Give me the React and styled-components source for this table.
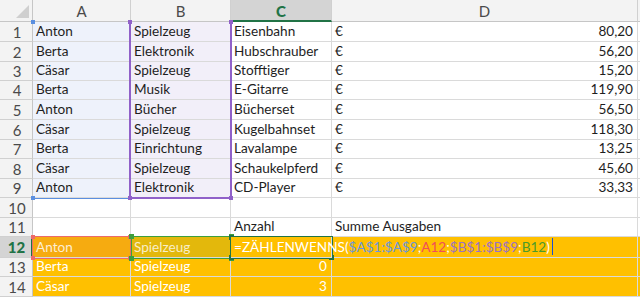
import React from "react";
import styled, { createGlobalStyle, css } from "styled-components";

const GlobalStyle = createGlobalStyle`
  body {
    margin: 0;
    overflow: hidden;
    background: #fff;
    font-family: Lato, "Open Sans", "Liberation Sans", sans-serif;
  }
`;

const ROW_HEIGHTS = [20, 20, 19, 19, 20, 20, 19, 20, 19, 20, 19, 21, 19, 20];

const rows = [
  ["Anton", "Spielzeug", "Eisenbahn", "80,20"],
  ["Berta", "Elektronik", "Hubschrauber", "56,20"],
  ["Cäsar", "Spielzeug", "Stofftiger", "15,20"],
  ["Berta", "Musik", "E-Gitarre", "119,90"],
  ["Anton", "Bücher", "Bücherset", "56,50"],
  ["Cäsar", "Spielzeug", "Kugelbahnset", "118,30"],
  ["Berta", "Einrichtung", "Lavalampe", "13,25"],
  ["Cäsar", "Spielzeug", "Schaukelpferd", "45,60"],
  ["Anton", "Elektronik", "CD-Player", "33,33"],
];

const AMBER = "#ffc000";

const Sheet = styled.div`
  display: grid;
  grid-template-columns: 33px 98px 100px 101px 306px 1fr;
  grid-template-rows: 22px ${ROW_HEIGHTS.map((h) => h + "px").join(" ")};
  width: 640px;
  height: 297px;
  overflow: hidden;
  font-size: 13.6px;
  color: #1e1e1e;
`;

const Cell = styled.div`
  grid-row: ${(p) => p.$r + 1};
  grid-column: ${(p) => p.$c + 1};
  box-sizing: border-box;
  border-right: 1px solid #dadada;
  border-bottom: 1px solid #dadada;
  display: flex;
  align-items: flex-end;
  justify-content: ${(p) => p.$align || "flex-start"};
  padding: 0 4px 2px 3px;
  white-space: nowrap;
  overflow: visible;
  min-width: 0;
  background: ${(p) => p.$bg || "#fff"};
  color: ${(p) => p.$fg || "#1e1e1e"};
  line-height: 16px;
  z-index: ${(p) => (p.$front ? 3 : "auto")};
`;

const ColHead = styled.div`
  grid-row: 1;
  grid-column: ${(p) => p.$c + 1};
  box-sizing: border-box;
  border-right: 1px solid #d0d0d0;
  border-bottom: ${(p) => (p.$active ? "2px solid #217346" : "1px solid #c6c6c6")};
  background: ${(p) => (p.$active ? "#d4d4d4" : "#f3f3f3")};
  color: ${(p) => (p.$active ? "#217346" : "#4a4a4a")};
  font-weight: ${(p) => (p.$active ? 900 : 400)};
  font-size: 15px;
  display: flex;
  align-items: center;
  justify-content: center;
  padding-top: 1px;
`;

const RowHead = styled.div`
  grid-row: ${(p) => p.$r + 1};
  grid-column: 1;
  box-sizing: border-box;
  border-bottom: 1px solid #d0d0d0;
  border-right: ${(p) => (p.$active ? "2px solid #217346" : "1px solid #c6c6c6")};
  background: ${(p) => (p.$active ? "#d4d4d4" : "#f3f3f3")};
  color: ${(p) => (p.$active ? "#217346" : "#4a4a4a")};
  font-weight: ${(p) => (p.$active ? 900 : 400)};
  font-size: 15px;
  display: flex;
  align-items: center;
  justify-content: center;
  padding-left: 2px;
`;

const Corner = styled.div`
  grid-row: 1;
  grid-column: 1;
  box-sizing: border-box;
  background: #f3f3f3;
  border-right: 1px solid #c6c6c6;
  border-bottom: 1px solid #c6c6c6;
  display: flex;
  align-items: flex-end;
  justify-content: flex-end;
  padding: 0 3px 3px 0;
`;

const Range = styled.div`
  grid-row: ${(p) => p.$rows};
  grid-column: ${(p) => p.$cols};
  position: relative;
  z-index: 2;
  pointer-events: none;
  margin: ${(p) => p.$margin || "-1px -1px -1px -2px"};
  border: ${(p) => p.$width || 1}px solid ${(p) => p.$color};
  ${(p) =>
    p.$hide &&
    css`
      ${p.$hide.map((s) => `border-${s}-color: transparent;`).join("\n")}
    `}
`;

const Handle = styled.span`
  position: absolute;
  width: ${(p) => p.$size || 4}px;
  height: ${(p) => p.$size || 4}px;
  background: ${(p) => p.$color};
  ${(p) => (p.$top ? "top" : "bottom")}: ${(p) => p.$off || -3}px;
  ${(p) => (p.$left ? "left" : "right")}: ${(p) => p.$off || -3}px;
`;

const Formula = styled.span`
  color: #fff;
`;

const Ref = styled.span`
  color: ${(p) => p.$color};
`;

const Caret = styled.span`
  display: inline-block;
  width: 1px;
  height: 17px;
  background: #1a4fd6;
  margin-left: 2px;
  vertical-align: -3px;
`;

function Corners({ color, size, off }) {
  return (
    <>
      <Handle $color={color} $size={size} $off={off} $top $left />
      <Handle $color={color} $size={size} $off={off} $top />
      <Handle $color={color} $size={size} $off={off} $left />
      <Handle $color={color} $size={size} $off={off} />
    </>
  );
}

export default function App() {
  const total = 14;
  return (
    <>
      <GlobalStyle />
      <Sheet>
        <Corner>
          <svg width="13" height="13" viewBox="0 0 13 13">
            <polygon points="13,0 13,13 0,13" fill="#cfcfcf" />
          </svg>
        </Corner>
        {["A", "B", "C", "D", ""].map((l, i) => (
          <ColHead key={l + i} $c={i + 1} $active={l === "C"}>
            {l}
          </ColHead>
        ))}

        {Array.from({ length: total }, (_, i) => (
          <RowHead key={i} $r={i + 1} $active={i + 1 === 12}>
            {i + 1}
          </RowHead>
        ))}

        {rows.map((r, i) => (
          <React.Fragment key={i}>
            <Cell $r={i + 1} $c={1} $bg="#eef2fb">{r[0]}</Cell>
            <Cell $r={i + 1} $c={2} $bg="#f2eff9">{r[1]}</Cell>
            <Cell $r={i + 1} $c={3}>{r[2]}</Cell>
            <Cell $r={i + 1} $c={4} $align="space-between">
              <span>€</span>
              <span>{r[3]}</span>
            </Cell>
            <Cell $r={i + 1} $c={5} />
          </React.Fragment>
        ))}

        {[10, 11].map((r) => (
          <React.Fragment key={r}>
            <Cell $r={r} $c={1} />
            <Cell $r={r} $c={2} />
            <Cell $r={r} $c={3}>{r === 11 ? "Anzahl" : ""}</Cell>
            <Cell $r={r} $c={4}>{r === 11 ? "Summe Ausgaben" : ""}</Cell>
            <Cell $r={r} $c={5} />
          </React.Fragment>
        ))}

        <Cell $r={12} $c={1} $bg="#f6ab10" $fg="rgba(255,255,255,0.82)">Anton</Cell>
        <Cell $r={12} $c={2} $bg="#e3b80c" $fg="rgba(255,255,255,0.78)">Spielzeug</Cell>
        <Cell $r={12} $c={3} $bg={AMBER} $front>
          <Formula>
            =ZÄHLENWENNS(
            <Ref $color="#6b97d9">$A$1:$A$9</Ref>;
            <Ref $color="#f04e5a">A12</Ref>;
            <Ref $color="#9b72c2">$B$1:$B$9</Ref>;
            <Ref $color="#4c9a2a">B12</Ref>)
            <Caret />
          </Formula>
        </Cell>
        <Cell $r={12} $c={4} $bg={AMBER} />
        <Cell $r={12} $c={5} $bg={AMBER} />

        {[
          [13, "Berta", "0"],
          [14, "Cäsar", "3"],
        ].map(([r, name, n]) => (
          <React.Fragment key={r}>
            <Cell $r={r} $c={1} $bg={AMBER} $fg="#fff">{name}</Cell>
            <Cell $r={r} $c={2} $bg={AMBER} $fg="#fff">Spielzeug</Cell>
            <Cell $r={r} $c={3} $bg={AMBER} $fg="#fff" $align="flex-end">{n}</Cell>
            <Cell $r={r} $c={4} $bg={AMBER} />
            <Cell $r={r} $c={5} $bg={AMBER} />
          </React.Fragment>
        ))}

        <Range $rows="2 / 11" $cols="2" $color="#5b8fe0" $width={1} $margin="-1px 0 -1px -1px" $hide={["top", "left", "right"]}>
          <Corners color="#5b8fe0" size={4} off={-2} />
        </Range>
        <Range $rows="2 / 11" $cols="3" $color="#9061c9" $width={2} $margin="-1px -1px -1px -2px" $hide={["top"]}>
          <Corners color="#9061c9" size={4} off={-3} />
        </Range>
        <Range $rows="13" $cols="2" $color="#ec6a6a" $width={1} $margin="-1px 0 -1px -1px">
          <Corners color="#ec6a6a" size={4} off={-2} />
        </Range>
        <Range $rows="13" $cols="3" $color="#3e9e3e" $width={1} $margin="-1px -1px -1px 0">
          <Corners color="#3e9e3e" size={5} off={-3} />
        </Range>
        <Range $rows="13" $cols="4" $color="#217346" $width={2} $margin="-1px -1px -1px -1px">
          <Handle $color="#217346" $size={5} $off={-3} />
          <Handle $color="#217346" $size={5} $off={-3} $top $left />
          <Handle $color="#217346" $size={5} $off={-3} $left />
        </Range>
      </Sheet>
    </>
  );
}
